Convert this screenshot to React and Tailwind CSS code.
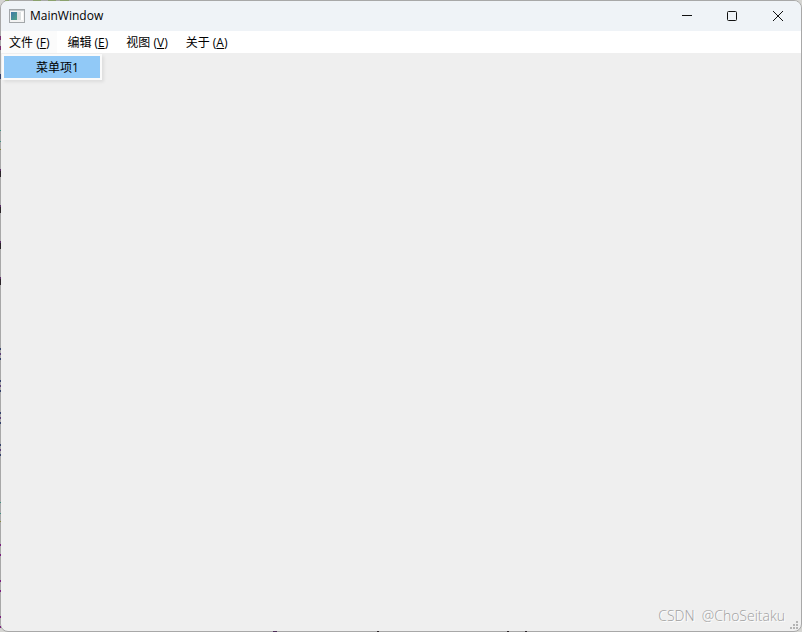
import React from 'react';

const MENUS = [
  { label: '文件', mnemonic: 'F', items: ['菜单项1'] },
  { label: '编辑', mnemonic: 'E' },
  { label: '视图', mnemonic: 'V' },
  { label: '关于', mnemonic: 'A' },
];

// Fragments of the desktop that show along the window's left edge.
const EDGE_MARKS = [
  [36, 4, '#7b2d6e'], [46, 4, '#7b2d6e'], [74, 5, '#33406a'],
  [130, 1, '#3f8f83'], [141, 1, '#3f8f83'], [149, 1, '#8a8a3a'],
  [169, 2, '#5b2d66'], [171, 6, '#2a2428'],
  [205, 2, '#5b2d66'], [207, 6, '#2a2428'],
  [241, 2, '#5b2d66'], [243, 6, '#2a2428'],
  [277, 2, '#5b2d66'], [279, 6, '#2a2428'],
  [348, 2, '#33406a'], [353, 2, '#5b3d76'], [358, 2, '#33406a'],
  [380, 2, '#33406a'], [385, 2, '#5b3d76'], [390, 2, '#33406a'],
  [412, 2, '#33406a'], [417, 2, '#5b3d76'], [422, 2, '#33406a'],
  [444, 2, '#33406a'], [449, 2, '#5b3d76'], [454, 2, '#33406a'],
  [502, 1, '#3f8f83'], [513, 1, '#3f8f83'], [521, 1, '#8a8a3a'],
  [544, 2, '#7b1d7e'], [554, 2, '#7b1d7e'], [580, 2, '#7b1d7e'],
  [590, 2, '#7b1d7e'], [616, 2, '#7b1d7e'], [626, 2, '#7b1d7e'],
];

const BOTTOM_MARKS = [
  [273, 4, '#4b2d56'], [377, 2, '#2a2428'], [507, 2, '#2a2428'], [525, 2, '#2a2428'],
];

function AppIcon() {
  return (
    <svg width="16" height="14" viewBox="0 0 16 14" aria-hidden="true">
      <defs>
        <linearGradient id="pane" x1="0" y1="0" x2="1" y2="1">
          <stop offset="0" stopColor="#3e78a8" />
          <stop offset="1" stopColor="#4fa386" />
        </linearGradient>
      </defs>
      <rect x="0.5" y="0.5" width="15" height="13" fill="#f3f3f3" stroke="#a3a7aa" />
      <path d="M1 1.5h14" stroke="#c5cacd" />
      <rect x="2" y="3" width="6" height="8" fill="url(#pane)" />
      <rect x="8" y="3" width="4" height="8" fill="#dce0e0" />
      <rect x="12" y="3" width="2" height="8" fill="#fff" />
    </svg>
  );
}

function CaptionButton({ label, children }) {
  return (
    <button type="button" aria-label={label} className="flex w-[46px] items-center justify-center">
      <svg width="12" height="12" viewBox="0 0 12 12" fill="none" stroke="#111" aria-hidden="true">
        {children}
      </svg>
    </button>
  );
}

function TitleBar() {
  return (
    <header className="flex h-[30px] shrink-0 bg-[#eff3f7]">
      <div className="flex flex-1 items-center gap-[5px] pl-2">
        <AppIcon />
        <h1 className="text-[12px] leading-4">MainWindow</h1>
      </div>
      <CaptionButton label="Minimize">
        <path d="M2 5.5h10" />
      </CaptionButton>
      <CaptionButton label="Maximize">
        <rect x="1.5" y="1.5" width="9" height="9" rx="1" />
      </CaptionButton>
      <CaptionButton label="Close">
        <path d="M1 1l10 10M11 1L1 11" />
      </CaptionButton>
    </header>
  );
}

function Menu({ label, mnemonic, items }) {
  return (
    <li className="relative">
      <button
        type="button"
        aria-haspopup="menu"
        aria-expanded={Boolean(items)}
        className={items ? 'h-[22px] bg-[#fbfbfb] px-2 pt-0.5' : 'h-[22px] px-2 pt-0.5'}
      >
        {label} (<span className="underline underline-offset-1">{mnemonic}</span>)
      </button>
      {items && (
        <ul className="absolute top-[23px] left-px z-10 w-[100px] border-2 border-[#fafafa] bg-[#fafafa] shadow-[2px_2px_3px_rgba(0,0,0,0.08)]">
          {items.map((item) => (
            <li key={item}>
              <button type="button" className="block h-[22px] w-full bg-[#91c9f7] pt-0.5 pl-8 text-left">
                {item}
              </button>
            </li>
          ))}
        </ul>
      )}
    </li>
  );
}

function SizeGrip() {
  return (
    <svg width="8" height="8" viewBox="0 0 8 8" fill="#b4b4b4" aria-hidden="true">
      <path d="M6 0h2v2h-2zM3 3h2v2h-2zM6 3h2v2h-2zM0 6h2v2h-2zM3 6h2v2h-2zM6 6h2v2h-2z" />
    </svg>
  );
}

export default function App() {
  return (
    <div className="relative h-screen overflow-hidden bg-[#d5d5d2] font-['Open_Sans','Noto_Sans_CJK_SC',sans-serif] text-[12px] leading-4 text-black">
      <div className="flex h-full flex-col overflow-hidden rounded-lg border border-[#a8a8a8] bg-[#efefef]">
        <TitleBar />
        <nav className="shrink-0 bg-white">
          <ul className="flex gap-0.5">
            {MENUS.map((menu) => (
              <Menu key={menu.mnemonic} {...menu} />
            ))}
          </ul>
        </nav>
        <main className="flex flex-1 items-end justify-end gap-[5px] pr-[3px] pb-[2px]">
          <p className="pb-[3px] font-['Open_Sans',sans-serif] text-[14px] leading-5 font-light whitespace-pre text-[#a0a0a0] [text-shadow:1px_1px_0_#fff]">
            CSDN  @ChoSeitaku
          </p>
          <SizeGrip />
        </main>
      </div>
      <svg className="pointer-events-none absolute inset-0 h-full w-full" aria-hidden="true">
        {EDGE_MARKS.map(([y, h, fill]) => (
          <rect key={y} x="0" y={y} width="1" height={h} fill={fill} />
        ))}
        {BOTTOM_MARKS.map(([x, w, fill]) => (
          <rect key={x} x={x} y="631" width={w} height="1" fill={fill} />
        ))}
        <path d="M5 0h4M33 0h8M48 0h8M60 0h9" stroke="#6f9a32" strokeWidth="1" />
      </svg>
    </div>
  );
}
